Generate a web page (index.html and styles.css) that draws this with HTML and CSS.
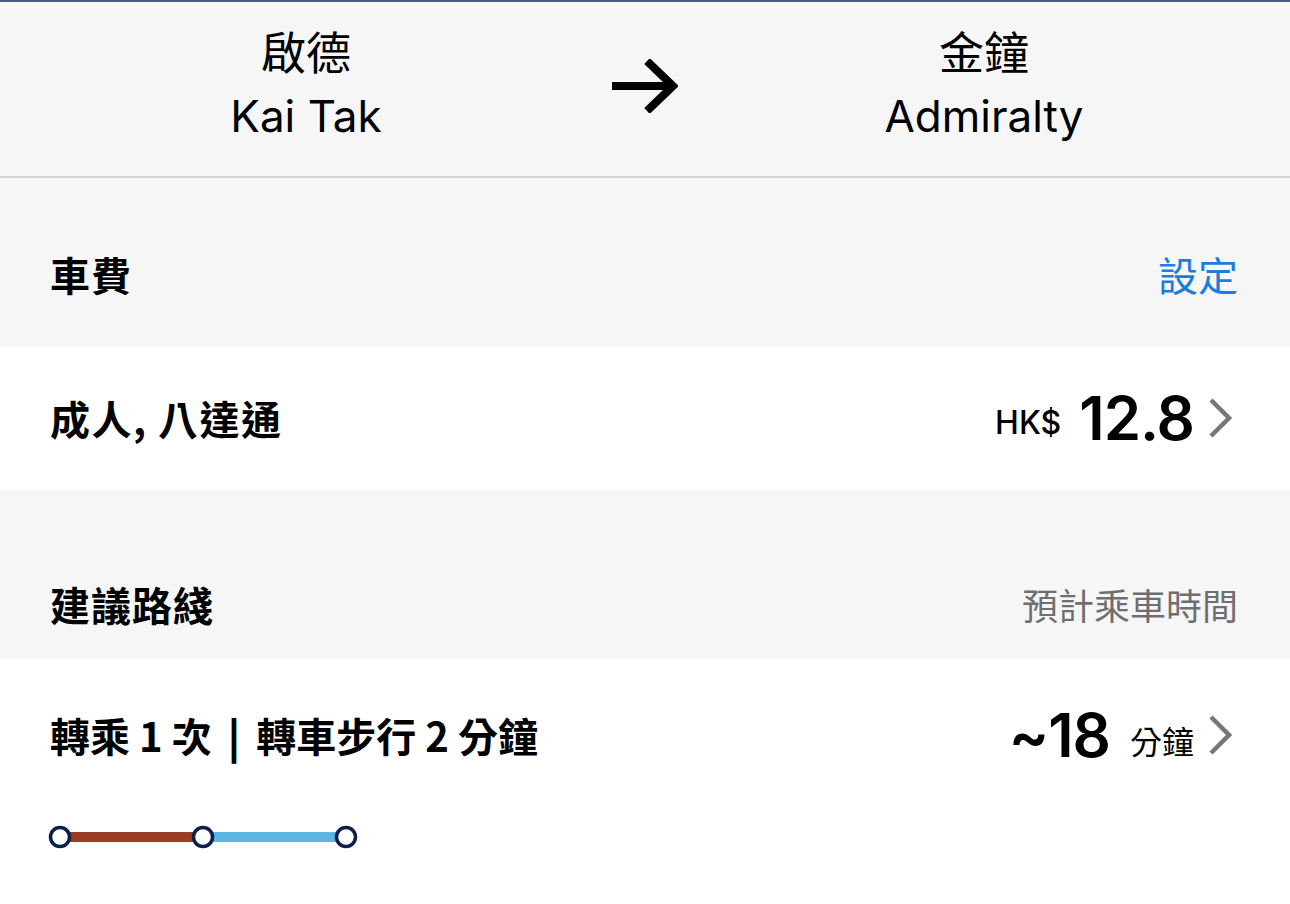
FILE: index.html
```html
<!DOCTYPE html>
<html>

<head>
    <title>車費</title>
    <link rel="stylesheet" href="styles.css">
</head>

<body>
    <div class="trip">
        <div class="station">
            <div class="station-zh">啟德</div>
            <div class="station-en">Kai Tak</div>
        </div>
        <div class="trip-arrow">
            <svg width="66" height="54" viewBox="0 0 66 54">
                <path d="M0 27 H60 M35 2 L61 27 L35 52" fill="none" stroke="#000" stroke-width="8" />
            </svg>
        </div>
        <div class="station">
            <div class="station-zh">金鐘</div>
            <div class="station-en">Admiralty</div>
        </div>
    </div>

    <div class="section-head fare-head">
        <span class="section-title">車費</span>
        <span class="section-link">設定</span>
    </div>
    <div class="row fare-row">
        <span class="row-label">成人, 八達通</span>
        <span class="row-value">
            <span class="currency">HK$</span>
            <span class="amount">12.8</span>
            <svg class="chevron" width="24" height="40" viewBox="0 0 24 40">
                <path d="M3 2 L21 20 L3 38" fill="none" stroke="#777" stroke-width="4.5" />
            </svg>
        </span>
    </div>

    <div class="section-head route-head">
        <span class="section-title">建議路綫</span>
        <span class="section-note">預計乘車時間</span>
    </div>
    <div class="route">
        <div class="row route-row">
            <span class="row-label">轉乘 1 次<span class="sep">|</span>轉車步行 2 分鐘</span>
            <span class="row-value">
                <span class="amount">~18</span>
                <span class="unit">分鐘</span>
                <svg class="chevron" width="24" height="40" viewBox="0 0 24 40">
                    <path d="M3 2 L21 20 L3 38" fill="none" stroke="#777" stroke-width="4.5" />
                </svg>
            </span>
        </div>
        <svg class="route-line" width="320" height="30" viewBox="0 0 320 30">
            <line x1="12" y1="15" x2="155" y2="15" stroke="#9a3b26" stroke-width="10" />
            <line x1="155" y1="15" x2="298" y2="15" stroke="#5db5e1" stroke-width="10" />
            <circle cx="12" cy="15" r="9.5" fill="#fff" stroke="#0b1f4b" stroke-width="3.5" />
            <circle cx="155" cy="15" r="9.5" fill="#fff" stroke="#0b1f4b" stroke-width="3.5" />
            <circle cx="298" cy="15" r="9.5" fill="#fff" stroke="#0b1f4b" stroke-width="3.5" />
        </svg>
    </div>
</body>

</html>
```

FILE: styles.css
```css
body {
    font-family: Inter, 'Noto Sans CJK TC', sans-serif;
    background: #ffffff;
    color: #000000;
    margin: 0;
    height: 904px;
    overflow: hidden;
}

.trip {
    display: grid;
    grid-template-columns: 612px 66px 1fr;
    align-items: center;
    height: 178px;
    background: #f6f6f6;
    border-top: 2px solid #4a5f7e;
    border-bottom: 2px solid #d3d3d3;
    box-sizing: border-box;
}

.station {
    text-align: center;
    padding-bottom: 6px;
}

.station-zh {
    font-family: 'Noto Sans CJK TC', sans-serif;
    font-size: 45px;
    line-height: 60px;
}

.station-en {
    font-size: 44px;
    line-height: 70px;
}

.trip-arrow {
    display: flex;
    align-items: center;
    padding-bottom: 6px;
}

.section-head {
    display: flex;
    justify-content: space-between;
    align-items: center;
    background: #f6f6f6;
    padding: 0 52px 0 50px;
}

.fare-head {
    height: 168px;
    padding-top: 24px;
    box-sizing: border-box;
}

.route-head {
    height: 168px;
    padding-top: 60px;
    box-sizing: border-box;
}

.section-title {
    font-family: 'Noto Sans CJK TC', sans-serif;
    font-weight: bold;
    font-size: 40px;
    letter-spacing: 1px;
}

.section-link {
    font-family: 'Noto Sans CJK TC', sans-serif;
    font-size: 40px;
    color: #1a7ddf;
}

.section-note {
    font-family: 'Noto Sans CJK TC', sans-serif;
    font-size: 36px;
    color: #6f6f6f;
}

.row {
    display: flex;
    justify-content: space-between;
    align-items: center;
    padding: 0 58px 0 50px;
}

.fare-row {
    height: 144px;
}

.row-label {
    font-family: 'Noto Sans CJK TC', sans-serif;
    font-weight: bold;
    font-size: 40px;
    letter-spacing: 1.5px;
}

.row-value {
    display: flex;
    align-items: center;
}

.currency {
    font-size: 32px;
    font-weight: 500;
    margin-right: 18px;
    padding-top: 8px;
}

.amount {
    font-size: 60px;
    font-weight: 600;
    letter-spacing: -1px;
}

.unit {
    font-family: 'Noto Sans CJK TC', sans-serif;
    font-size: 32px;
    margin-left: 20px;
    padding-top: 10px;
}

.chevron {
    margin-left: 14px;
}

.route {
    background: #ffffff;
}

.route-row {
    height: 154px;
}

.route-row .row-label {
    font-size: 40px;
    letter-spacing: 0;
}

.sep {
    font-weight: 900;
    margin: 0 16px;
}

.route-line {
    display: block;
    margin: 10px 0 0 48px;
}
```
